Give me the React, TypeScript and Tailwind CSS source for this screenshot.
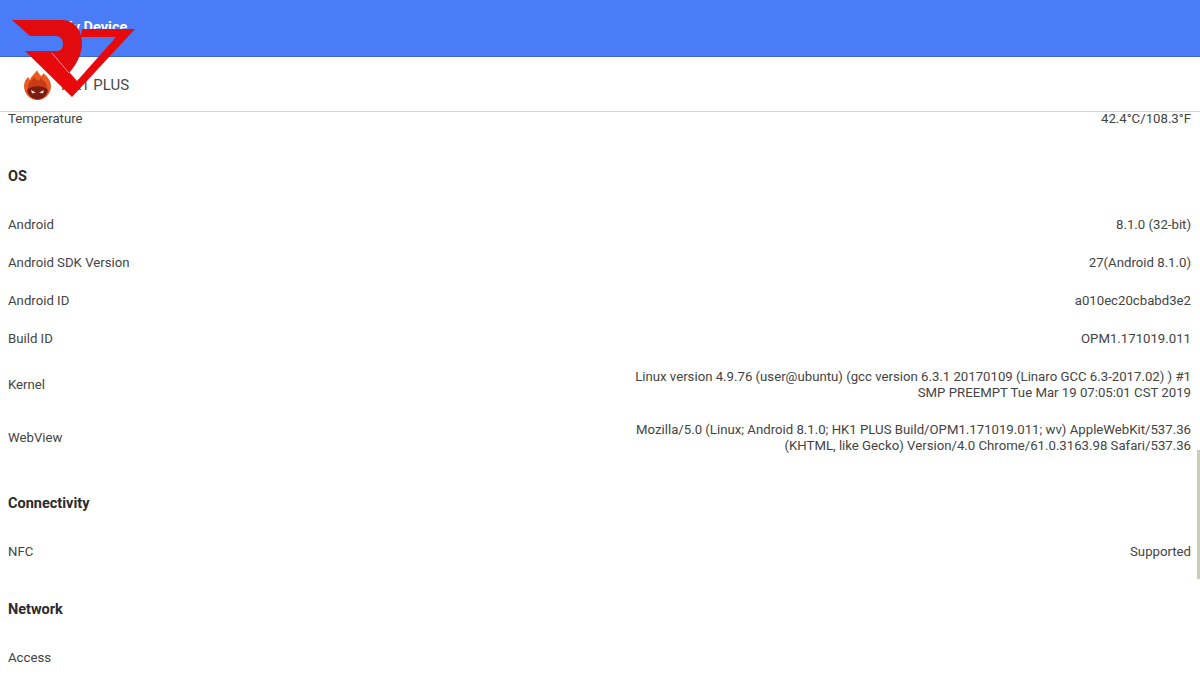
const rows1 = [
  { label: "Android", value: "8.1.0 (32-bit)" },
  { label: "Android SDK Version", value: "27(Android 8.1.0)" },
  { label: "Android ID", value: "a010ec20cbabd3e2" },
  { label: "Build ID", value: "OPM1.171019.011" },
];

function Row({ label, value }: { label: string; value?: string }) {
  return (
    <div className="flex h-[38px] items-center justify-between pl-2 pr-[9px]">
      <span>{label}</span>
      {value && <span>{value}</span>}
    </div>
  );
}

function Heading({ children }: { children: string }) {
  return (
    <div className="flex h-[68px] items-center pl-2 pt-[10px] text-[14.5px] font-bold text-[#2b2b2b]">
      {children}
    </div>
  );
}

function RedLogo() {
  return (
    <svg className="absolute left-0 top-0 z-20" width="140" height="100" viewBox="0 0 140 100" aria-hidden="true">
      <path d="M12 20H62C75 20 82 31 82 43C82 55 76 65 69 73L51 51H57C61 51 63 48 63 44C63 39 60 36 56 36H30Z" fill="#e10a0f" />
      <path d="M25 51H51L77 81L116 37H81L82 29H135L72 97Z" fill="#e8090d" />
      <path d="M52 53L69 73" stroke="#f6c9c9" strokeWidth="0.7" />
    </svg>
  );
}

function FlameBadge() {
  return (
    <svg className="absolute left-[23px] top-[70px] z-20" width="29" height="30" viewBox="0 0 29 30" aria-hidden="true">
      <path d="M14 0C15 3 17 4 18 6C20 5 20 4 20 3C24 6 28 11 28 16C28 24 22 30 14.5 30C7 30 1 24 1 16C1 12 3 9 5 7C6 8 6 9 7 10C8 6 12 4 14 0Z" fill="#ea5a22" />
      <path d="M5 17C5 12 9 11 11 7C13 9 14 10 15 11C17 10 17 9 18 8C21 11 24 13 24 18C24 22 5 22 5 17Z" fill="#c93a16" />
      <path d="M4 20C9 15 20 15 25 20C24 26 19 29.5 14.5 29.5C10 29.5 5 26 4 20Z" fill="#7b1a12" />
      <path d="M8 20L13 22.5L9 23.5ZM21 20L16 22.5L20 23.5Z" fill="#f3d9c8" />
    </svg>
  );
}

export default function App() {
  return (
    <div className="relative h-[675px] w-[1200px] overflow-hidden bg-white font-['Roboto',sans-serif] text-[13.2px] text-[#444444]">
      <RedLogo />
      <FlameBadge />
      <header className="relative z-10">
        <div className="flex h-[57px] items-center border-b border-[#3d66c9] bg-[#4a7cf7] pl-[60px] text-[14.5px] font-bold text-white">
          <span>My Device</span>
        </div>
        <div className="flex h-[55px] items-center border-b border-[#d6d6d0] bg-white pl-[61px] pt-[2px] text-[15px] text-[#4a4a4a]">
          HK1 PLUS
        </div>
      </header>
      <main className="-mt-[12px]">
        <Row label="Temperature" value="42.4°C/108.3°F" />
        <Heading>OS</Heading>
        {rows1.map((r) => (
          <Row key={r.label} label={r.label} value={r.value} />
        ))}
        <div className="flex h-[53px] items-center justify-between pl-2 pr-[9px]">
          <span>Kernel</span>
          <span className="text-right leading-[16px]">
            Linux version 4.9.76 (user@ubuntu) (gcc version 6.3.1 20170109 (Linaro GCC 6.3-2017.02) ) #1
            <br />
            SMP PREEMPT Tue Mar 19 07:05:01 CST 2019
          </span>
        </div>
        <div className="flex h-[54px] items-center justify-between pl-2 pr-[9px]">
          <span>WebView</span>
          <span className="text-right leading-[16px]">
            Mozilla/5.0 (Linux; Android 8.1.0; HK1 PLUS Build/OPM1.171019.011; wv) AppleWebKit/537.36
            <br />
            (KHTML, like Gecko) Version/4.0 Chrome/61.0.3163.98 Safari/537.36
          </span>
        </div>
        <Heading>Connectivity</Heading>
        <Row label="NFC" value="Supported" />
        <Heading>Network</Heading>
        <Row label="Access" />
      </main>
      <div className="absolute right-0 top-[450px] h-[129px] w-[3px] bg-[#c9cdb4]" />
    </div>
  );
}
